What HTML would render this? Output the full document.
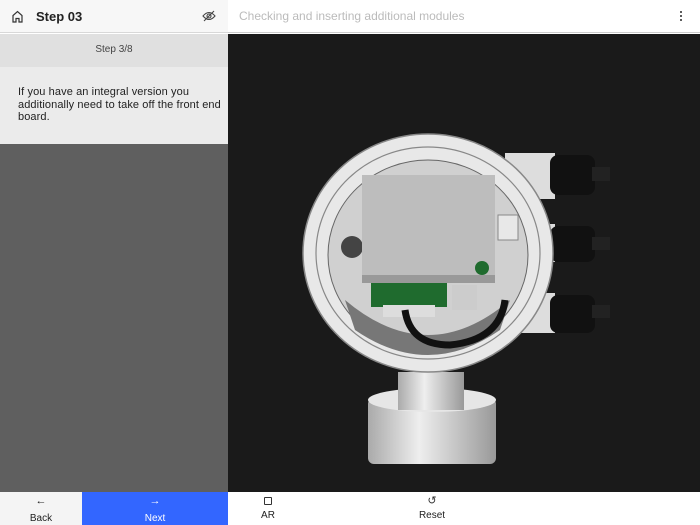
<!DOCTYPE html>
<html><head><meta charset="utf-8"><style>
*{margin:0;padding:0;box-sizing:border-box}
body{width:700px;height:525px;overflow:hidden;font-family:"Liberation Sans","DejaVu Sans",sans-serif;position:relative;background:#fff}
.a{position:absolute}
</style></head><body>
<div class="a" style="left:0;top:0;width:228px;height:33px;background:#f7f7f7;border-bottom:1px solid #d8d8d8"></div>
<svg class="a" style="left:11px;top:10px" width="13" height="13" viewBox="0 0 13 13"><path d="M2 12V5.5L6.5 1.5 11 5.5V12H8V8.5H5V12Z" fill="none" stroke="#333" stroke-width="1.2"/></svg>
<div class="a" style="left:36px;top:9px;font-size:13px;font-weight:bold;color:#222">Step 03</div>
<svg class="a" style="left:202px;top:10px" width="14" height="12" viewBox="0 0 14 12"><path d="M1 6Q7 -1 13 6Q7 13 1 6Z" fill="none" stroke="#444" stroke-width="1.1"/><circle cx="7" cy="6" r="2" fill="none" stroke="#444" stroke-width="1.1"/><path d="M2 11L12 1" stroke="#444" stroke-width="1.1"/></svg>
<div class="a" style="left:0;top:34px;width:228px;height:33px;background:#e0e0e0;font-size:10px;color:#444;text-align:center;line-height:31px">Step 3/8</div>
<div class="a" style="left:0;top:67px;width:228px;height:77px;background:#ebebeb;font-size:11px;color:#222;line-height:12.5px;padding:19px 6px 0 18px;letter-spacing:0.1px">If you have an integral version you additionally need to take off the front end board.</div>
<div class="a" style="left:0;top:144px;width:228px;height:348px;background:#5f5f5f"></div>
<div class="a" style="left:228px;top:0;width:472px;height:33px;background:#fff;border-bottom:1px solid #ccc"></div>
<div class="a" style="left:239px;top:9px;font-size:12px;color:#bbb">Checking and inserting additional modules</div>
<div class="a" style="left:680px;top:10px;width:2px;height:12px;background:radial-gradient(circle,#333 0.9px,transparent 1.1px) 0 0/2px 4px"></div>
<div class="a" style="left:228px;top:34px;width:472px;height:458px;background:#1a1a1a"></div>
<svg class="a" style="left:228px;top:34px" width="472" height="458" viewBox="228 34 472 458">
<defs><linearGradient id="g" x1="0" x2="1"><stop offset="0" stop-color="#aaa"/><stop offset=".4" stop-color="#eee"/><stop offset="1" stop-color="#999"/></linearGradient></defs>
<g>
<rect x="505" y="153" width="50" height="46" fill="#ddd"/><rect x="550" y="155" width="45" height="40" rx="8" fill="#111"/><rect x="592" y="167" width="18" height="14" fill="#222"/>
<rect x="505" y="224" width="50" height="38" fill="#ddd"/><rect x="550" y="226" width="45" height="36" rx="8" fill="#111"/><rect x="592" y="237" width="18" height="13" fill="#222"/>
<rect x="505" y="293" width="50" height="40" fill="#ddd"/><rect x="550" y="295" width="45" height="38" rx="8" fill="#111"/><rect x="592" y="305" width="18" height="13" fill="#222"/>
</g>
<rect x="368" y="398" width="128" height="66" rx="6" fill="url(#g)"/>
<ellipse cx="432" cy="400" rx="64" ry="12" fill="#e6e6e6"/>
<rect x="398" y="372" width="66" height="38" fill="url(#g)"/>
<ellipse cx="428" cy="253" rx="125" ry="119" fill="#e8e8e8" stroke="#888" stroke-width="1.5"/>
<ellipse cx="428" cy="253" rx="112" ry="106" fill="none" stroke="#888" stroke-width="1.2"/>
<ellipse cx="428" cy="255" rx="100" ry="95" fill="#d0d0d0" stroke="#666"/>
<path d="M345 300 Q428 370 510 300 L500 330 Q428 380 355 330Z" fill="#777"/>
<circle cx="352" cy="247" r="11" fill="#444"/>
<rect x="362" y="175" width="133" height="106" fill="#bdbdbd"/>
<rect x="362" y="275" width="133" height="8" fill="#999"/>
<rect x="371" y="283" width="76" height="24" fill="#1f6b2e"/>
<rect x="452" y="285" width="25" height="25" fill="#ccc"/>
<circle cx="482" cy="268" r="7" fill="#1f6b2e"/>
<rect x="498" y="215" width="20" height="25" fill="#e8e8e8" stroke="#888"/>
<rect x="383" y="305" width="52" height="12" fill="#ddd"/>
<path d="M405 310 Q410 345 450 345 Q500 340 505 300" fill="none" stroke="#111" stroke-width="7"/>
</svg>
<div class="a" style="left:0;top:492px;width:82px;height:33px;background:#f4f4f4;color:#222;font-size:10px;text-align:center"><div style="margin-top:4px;font-size:11px;line-height:11px">&#8592;</div><div style="margin-top:6px">Back</div></div>
<div class="a" style="left:82px;top:492px;width:146px;height:33px;background:#3366ff;color:#fff;font-size:10px;text-align:center"><div style="margin-top:4px;font-size:11px;line-height:11px">&#8594;</div><div style="margin-top:6px">Next</div></div>
<div class="a" style="left:228px;top:492px;width:472px;height:33px;background:#fff"></div>
<div class="a" style="left:264px;top:497px;width:8px;height:8px;border:1px solid #333;border-radius:1px"></div>
<div class="a" style="left:248px;top:510px;width:40px;text-align:center;font-size:10px;color:#222">AR</div>
<div class="a" style="left:412px;top:494px;width:40px;text-align:center;font-size:11px;color:#333">&#8634;</div>
<div class="a" style="left:412px;top:510px;width:40px;text-align:center;font-size:10px;color:#222">Reset</div>
</body></html>
